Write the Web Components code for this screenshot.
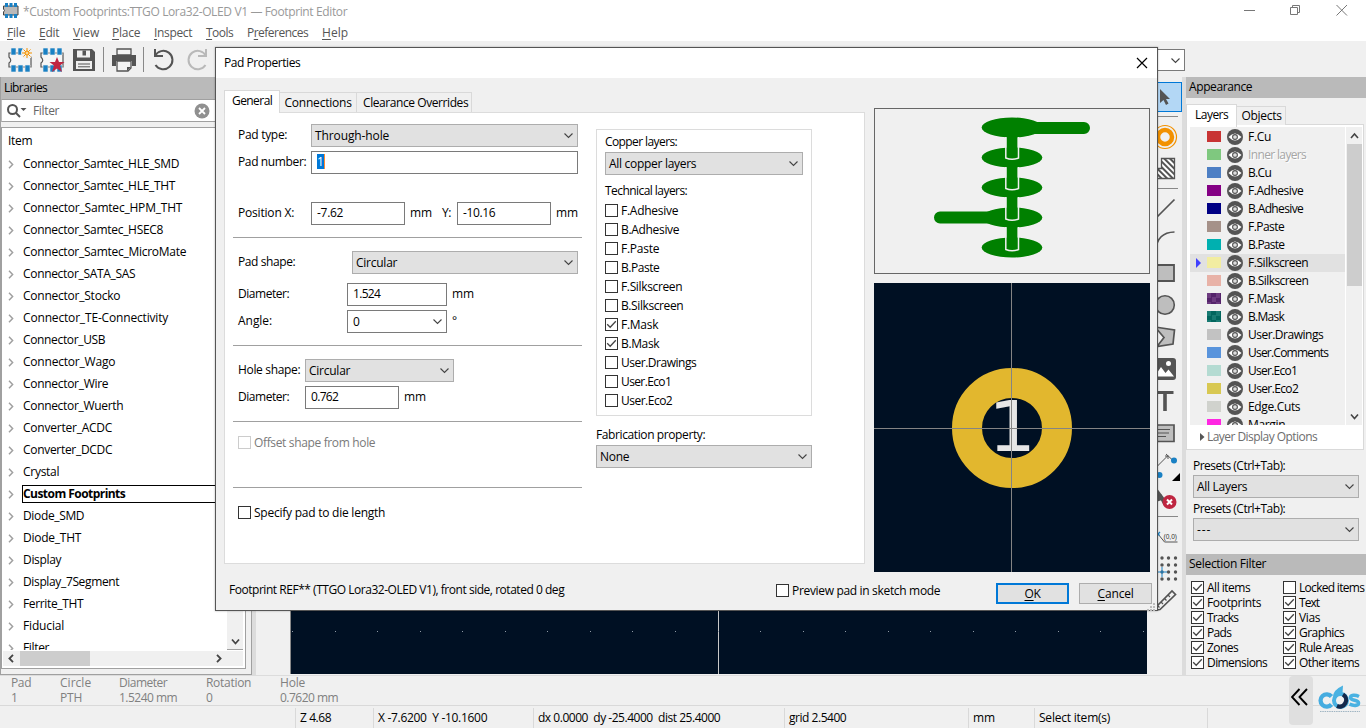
<!DOCTYPE html>
<html lang="en">
<head>
<meta charset="utf-8">
<title>Footprint Editor</title>
<style>
html,body{margin:0;height:100%;overflow:hidden;background:#f0f0f0}
body{font:12px/16px "Open Sans","Noto Sans",sans-serif;color:#000}
</style>
</head>
<body>
<footprint-editor></footprint-editor>
<script>
const BASE = '*{box-sizing:border-box}:host{display:block;box-sizing:border-box}svg{display:block}';
function define(name, css, html) {
  customElements.define(name, class extends HTMLElement {
    constructor() {
      super();
      this.attachShadow({mode: 'open'});
    }
    connectedCallback() {
      if (this.shadowRoot.childNodes.length) return;
      const body = typeof html === 'function' ? html(this) : html;
      this.shadowRoot.innerHTML = '<style>' + BASE + css + '</style>' + body;
    }
  });
}
const at = (el, n, d = '') => el.hasAttribute(n) ? el.getAttribute(n) : d;

/* Single line label; the w attribute sets its drawn width by tracking. */
customElements.define('ui-text', class extends HTMLElement {
  constructor() {
    super();
    this.attachShadow({mode: 'open'}).innerHTML =
      '<style>:host{display:block;white-space:pre;line-height:16px;height:16px;flex:none}span{display:inline-block}</style><span><slot></slot></span>';
  }
  connectedCallback() {
    const w = +this.getAttribute('w');
    if (!w) return;
    const s = this.shadowRoot.querySelector('span');
    const n = this.textContent.length;
    s.style.letterSpacing = '0';
    const nat = s.getBoundingClientRect().width;
    if (nat) s.style.letterSpacing = ((w + .2 - nat) / n).toFixed(3) + 'px';
    this.style.width = w + 'px';
  }
});
const T = (t, w, extra = '') => `<ui-text ${w ? `w="${w}"` : ''} ${extra}>${t}</ui-text>`;

define('ui-combo', `
:host{height:23px;border:1px solid #adadad;background:#e1e1e1;display:flex;align-items:center;justify-content:space-between;padding:0 3px 0 3px;flex:none}
:host([edit]){background:#fff;border-color:#7a7a7a;padding-left:5px}
svg{flex:none}`,
  el => `${T(at(el, 'value'), at(el, 'tw'))}<svg width="11" height="7" viewBox="0 0 11 7"><path d="M1.500 1.500l4 4 4-4" fill="none" stroke="#444" stroke-width="1.100"/></svg>`);

define('ui-input', `
:host{height:23px;border:1px solid #7a7a7a;background:#fff;padding:2px 0 0 5px;flex:none}
:host([selected]) ui-text{background:#0078d7;color:#fff;border-right:1px solid #ff8a30;height:15px;line-height:15px;width:8px}`,
  el => T(at(el, 'value'), at(el, 'tw')));

define('ui-check', `
:host{display:flex;align-items:center;height:15px;flex:none}
i{width:13px;height:13px;border:1px solid #333;background:#fff;flex:none;margin-right:3px}
:host([disabled]){color:#7a7a7a}
:host([disabled]) i{border-color:#ccc}`,
  el => `<i>${el.hasAttribute('on') ? '<svg width="11" height="11" viewBox="0 0 11 11"><path d="M1.200 5.200l3 3 5.600-5.900" fill="none" stroke="#444" stroke-width="1.300"/></svg>' : ''}</i>${T(at(el, 'label'), at(el, 'w'))}`);

define('title-bar', `
:host{display:flex;height:24px;background:#fff;color:#999;padding:0 18px 0 3px}
.ic{margin-top:3px}ui-text{margin:4px 0 0 4px}.g{flex:1}.b{display:flex;gap:35px;margin-top:4px}`,
  `<svg class="ic" width="16" height="15" viewBox="0 0 16 15"><path d="M.5 3h14.500v9h-14.500v-3q2-1.500 0-3z" fill="#b9b9b9" stroke="#444"/><path d="M2 0h3v4H2zM6.500 0h3v4h-3zM11 0h3v4h-3zM2 11h3v4H2zM6.500 11h3v4h-3zM11 11h3v4h-3z" fill="#1a81c4"/></svg>
  ${T('*Custom Footprints:TTGO Lora32-OLED V1 — Footprint Editor', 324)}
  <span class="g"></span>
  <span class="b"><svg width="11" height="12"><path d="M0 6.500h11" stroke="#777"/></svg>
  <svg width="11" height="12"><path d="M.5 3.500h7v7h-7zM2.500 3.500v-2h7v7h-2" fill="none" stroke="#777"/></svg>
  <svg width="12" height="12"><path d="M.5 1l10.500 10.500M11 1L.5 11.500" stroke="#777"/></svg></span>`);

define('menu-bar', `
:host{display:flex;height:17px;background:#fff;color:#555;padding:1px 0 0 7px}
u{text-underline-offset:2px}`,
  [['File', 18, 0, 14], ['Edit', 20, 0, 14], ['View', 26, 0, 13], ['Place', 28, 0, 14], ['Inspect', 38, 0, 14], ['Tools', 27, 0, 14], ['Preferences', 61, 1, 14], ['Help', 26, 0, 0]]
    .map(([t, w, i, g]) => T(t.slice(0, i) + '<u>' + t[i] + '</u>' + t.slice(i + 1), w, `style="margin-right:${g}px"`)).join(''));

const chip = '<path d="M2 6h22v14h-22v-4q3.500-2.500 0-6z" fill="#f6f6f6" stroke="#555" stroke-width="1.200"/><path d="M4 1h5v7H4zM11 1h5v7h-5zM18 1h5v7h-5zM4 18h5v7H4zM11 18h5v7h-5zM18 18h5v7h-5z" fill="#1a81c4" stroke="#f0f0f0" stroke-width=".6"/>';
define('tool-bar', `
:host{display:flex;height:36px;padding:6px 0 0 7px;background:#f0f0f0}
svg{margin-right:6px;flex:none}i{width:1px;height:25px;background:#888;margin-right:8px}
.g{flex:1}.c{width:60px;margin:2px 181px 0 0}`,
  `<svg width="26" height="26" viewBox="0 0 26 26">${chip}<circle cx="20" cy="6" r="6" fill="#f0f0f0"/><path d="M20 1v10M15 6h10M16.500 2.500l7 7M23.500 2.500l-7 7" stroke="#f29100"/><circle cx="20" cy="6" r="2" fill="#ffd591" stroke="#f29100"/></svg>
  <svg width="26" height="26" viewBox="0 0 26 26">${chip}<path d="M18 10l2 5h5.500l-4.500 3.600 2 6.400-5-3.500-5 3.500 2-6.400-4.500-3.600h5.500z" fill="#bf2641"/></svg>
  <svg width="26" height="26" viewBox="0 0 26 26" style="margin-right:6px"><path d="M2 2h19l3 3v19H2z" fill="#545454"/><path d="M6 3.500h13v7H6zM5 14h16v8H5z" fill="#f0f0f0"/><path d="M11.500 3.500h3.500v5h-3.500z" fill="#545454"/><path d="M7 17h12M7 19.800h12" stroke="#545454"/></svg>
  <i style="margin-right:7px"></i>
  <svg width="26" height="26" viewBox="0 0 26 26" style="margin-right:6px"><path d="M6 2h14v6H6z" fill="#f4f4f4" stroke="#545454" stroke-width="1.300"/><path d="M1 8h24v11h-4v-5H5v5H1z" fill="#545454"/><path d="M6 14h14v7l-3 3H6z" fill="#f4f4f4" stroke="#545454" stroke-width="1.300"/><path d="M20 20h-4v4z" fill="#545454"/></svg>
  <i style="margin-right:7px"></i>
  <svg width="26" height="26" viewBox="0 0 26 26" style="margin-right:7px"><path d="M4 2v7h8M4 9A9.200 9.200 0 1 1 4.500 18" fill="none" stroke="#545454" stroke-width="2"/></svg>
  <svg width="26" height="26" viewBox="0 0 26 26"><path d="M22 2v7h-8M22 9A9.200 9.200 0 1 0 21.500 18" fill="none" stroke="#b9b9b9" stroke-width="2"/></svg>
  <span class="g"></span><ui-combo class="c" edit value="" style="height:22px"></ui-combo>`);

const libs = [['Connector_Samtec_HLE_SMD', 156], ['Connector_Samtec_HLE_THT', 152], ['Connector_Samtec_HPM_THT', 159], ['Connector_Samtec_HSEC8', 140], ['Connector_Samtec_MicroMate', 163], ['Connector_SATA_SAS', 112], ['Connector_Stocko', 97], ['Connector_TE-Connectivity', 145], ['Connector_USB', 82], ['Connector_Wago', 92], ['Connector_Wire', 85], ['Connector_Wuerth', 100], ['Converter_ACDC', 89], ['Converter_DCDC', 89], ['Crystal', 36], ['Custom Footprints', 102], ['Diode_SMD', 61], ['Diode_THT', 58], ['Display', 38], ['Display_7Segment', 96], ['Ferrite_THT', 60], ['Fiducial', 41], ['Filter', 26]];
define('tree-row', `
:host{display:flex;height:22px;align-items:center;padding-left:6px}
svg{margin-right:8px;flex:none}
div{height:18px;flex:1;border:1px solid transparent;display:flex;align-items:center}
:host([sel]) div{border-color:#000;font-weight:bold}`,
  el => `<svg width="6" height="9" viewBox="0 0 6 9"><path d="M1 .8l3.600 3.700L1 8.200" fill="none" stroke="#a0a0a0" stroke-width="1.500"/></svg><div>${T(at(el, 'label'), at(el, 'w'))}</div>`);
define('library-tree', `
:host{width:252px;height:598px;border:1px solid #a0a0a0;border-top:0;flex:none;display:flex;flex-direction:column;background:#f0f0f0}
h3{margin:0;height:22px;background:#bababa;padding:3px 3px;font:inherit}
.s{height:23px;background:#fff;border:1px solid #a0a0a0;border-left-color:#bbb;display:flex;align-items:center;padding-left:4px;color:#666;width:246px}
.s ui-text{margin-left:6px}
.t{margin-top:5px;height:542px;width:245px;background:#fff;border:1px solid #a0a0a0;display:flex;flex-direction:column}
.m{height:522px;display:flex;overflow:hidden}
.l{flex:1;overflow:hidden;padding-top:2px}.l>ui-text{margin:3px 0 4px 6px}
.v{width:16px;margin-right:2px;background:#f0f0f0;display:flex;align-items:flex-end;justify-content:center;padding-bottom:3px;border-bottom:1px solid #a0a0a0}
.h{height:15px;margin:1px 0 0 1px;background:#f0f0f0;display:flex;align-items:center;width:240px;padding-left:5px}
.h b{width:70px;height:15px;background:#cdcdcd;margin:0 126px 0 6px}`,
  `<h3>${T('Libraries', 43)}</h3>
  <div class="s"><svg width="21" height="16" viewBox="0 0 21 16"><circle cx="6.500" cy="6.500" r="4.500" fill="none" stroke="#545454" stroke-width="2"/><path d="M10 10l4 4" stroke="#545454" stroke-width="2"/><path d="M14.500 5h6l-3 3z" fill="#545454"/></svg>${T('Filter', 26)}
  <svg style="margin-left:135px" width="16" height="16" viewBox="0 0 16 16"><circle cx="8" cy="8" r="7.500" fill="#909090"/><path d="M5 5l6 6M11 5l-6 6" stroke="#fff" stroke-width="1.800"/></svg></div>
  <div class="t"><div class="m"><div class="l">${T('Item', 24)}
  ${libs.map(([l, w]) => `<tree-row label="${l}" w="${w}" ${l === 'Custom Footprints' ? 'sel' : ''}></tree-row>`).join('')}</div>
  <div class="v"><svg width="9" height="8" viewBox="0 0 9 8"><path d="M1 1.500l3.500 4 3.500-4" fill="none" stroke="#444" stroke-width="1.800"/></svg></div></div>
  <div class="h"><svg width="6" height="9" viewBox="0 0 6 9"><path d="M5 .8l-3.600 3.700L5 8.200" fill="none" stroke="#444" stroke-width="1.800"/></svg><b></b><svg width="6" height="9" viewBox="0 0 6 9"><path d="M1 .8l3.600 3.700L1 8.200" fill="none" stroke="#444" stroke-width="1.800"/></svg></div></div>`);

define('board-canvas', `:host{width:857px;height:597px;background:#001023;flex:none;border-left:1px solid #888}`,
  `<svg width="856" height="597"><path d="M427.500 0v597" stroke="#c8c8c8"/><g fill="#8f9aa5">${Array.from({length: 21}, (_, i) => `<rect x="${Math.round(1 + i * 42.55)}" y="554" width="1" height="1"/>`).join('')}</g></svg>`);

/* Right-hand drawing tools; icons share a 34x32 cell. */
const K = '#545454';
const cell = (inner, h = 32) => `<svg width="34" height="${h}" viewBox="0 0 34 ${h}">${inner}</svg>`;
const sep = h => `<svg width="34" height="${h}" viewBox="0 0 34 ${h}"><path d="M4 ${Math.floor(h / 2) - .5}h27" stroke="#888"/></svg>`;
define('draw-tools', `
:host{width:35px;height:598px;flex:none;padding-top:5px;background:#f0f0f0}
.on{height:30px;border:1px solid #0078d7;background:#b3d7f5}`,
  `<div class="on"><svg width="32" height="28" viewBox="0 0 32 28"><path d="M12 6v14l3.500-3 2.500 5 2.500-1.500-2.500-4.500h4z" fill="${K}"/></svg></div>
  ${sep(10)}
  ${cell(`<circle cx="18" cy="15" r="11.500" fill="none" stroke="#f29100" stroke-width="1.200"/><circle cx="18" cy="15" r="7" fill="none" stroke="#f29100" stroke-width="4.500"/>`)}
  ${cell(`<defs><pattern id="p" width="4" height="4" patternUnits="userSpaceOnUse" patternTransform="rotate(-45)"><rect width="4" height="4" fill="#fff"/><rect width="2" height="4" fill="${K}"/></pattern></defs><path d="M8.500 24.500v-10h6v-10h13v20z" fill="url(#p)" stroke="${K}" stroke-width="1.300"/>`)}
  ${sep(7)}
  ${cell(`<path d="M9 25L27.500 6.500" stroke="${K}" stroke-width="1.700"/>`)}
  ${cell(`<path d="M9 25Q10 7.500 27.500 7" fill="none" stroke="${K}" stroke-width="1.700"/>`)}
  ${cell(`<path d="M8 8h19v16h-19z" fill="#bebebe" stroke="${K}" stroke-width="1.800"/>`)}
  ${cell(`<circle cx="18" cy="16" r="9.300" fill="#bebebe" stroke="${K}" stroke-width="1.600"/>`)}
  ${cell(`<path d="M8 6l19.500 3-1.500 14-16 2.500 7-9z" fill="#bebebe" stroke="${K}" stroke-width="1.700"/>`)}
  ${cell(`<rect x="6" y="5" width="23" height="22" rx="3" fill="${K}"/><path d="M7.500 23.500L14 14l4.500 6 3-3.500 5.500 7z" fill="#fff"/><circle cx="21.500" cy="10.500" r="2.500" fill="#fff"/>`)}
  ${cell(`<path d="M9.500 6h17v3h-6.700v17h-3.600V9H9.500z" fill="${K}"/>`)}
  ${cell(`<path d="M8 8h19v16.500H8z" fill="#bebebe" stroke="${K}" stroke-width="1.700"/><path d="M11 12.500h12M11 16h11M11 19.500h8" stroke="${K}"/>`)}
  ${cell(`<path d="M8.500 19L21 6.500M19 5l6 5.500M8.500 16l2 4M18 7h3v3" fill="none" stroke="${K}"/><circle cx="27" cy="11.500" r="3" fill="#1a81c4"/><circle cx="12.500" cy="26" r="3" fill="#1a81c4"/><path d="M33 24v8h-8z"/>`, 33)}
  ${cell(`<path d="M9 5v15l9-3z" fill="${K}"/><path d="M13 13l4 8" stroke="${K}" stroke-width="3"/><circle cx="22.500" cy="20" r="7" fill="#bf2641"/><path d="M20 17.500l5 5M25 17.500l-5 5" stroke="#fff" stroke-width="2"/>`)}
  ${sep(6)}
  ${cell(`<path d="M11 14l6.500 8h13" fill="none" stroke="${K}"/><path d="M8 11l4.500 4.500M13 12l-4 4" stroke="#1a81c4" stroke-width="1.300"/><text x="16.500" y="19" font-family="Liberation Sans" font-size="8" fill="#333" textLength="13.500" lengthAdjust="spacingAndGlyphs">(0,0)</text>`, 33)}
  ${cell(`<g fill="${K}">${[5, 12, 19, 26].map(y => [15, 21.500, 28.500].map(x => `<circle cx="${x}" cy="${y}" r="1.700"/>`).join('')).join('')}</g><path d="M10 19h10M15 14v10" stroke="#1a81c4"/>`)}
  ${cell(`<path d="M10 21L25 6l3.500 3.500L13 24.500l-4 .500z" fill="#f0f0f0" stroke="${K}" stroke-width="1.700"/><path d="M21 10l2 2M17.500 13.500l2 2M14 17l2 2M10.500 20.500l2 2" stroke="${K}" stroke-width="1.200"/>`)}`);

const layers = [['F.Cu', '#c83434', 23], ['Inner layers', '#7fc87f', 58], ['B.Cu', '#4d7fc4', 23], ['F.Adhesive', '#840084', 55], ['B.Adhesive', '#000084', 55], ['F.Paste', '#a59189', 36], ['B.Paste', '#00b0b0', 36], ['F.Silkscreen', '#f2eda1', 60], ['B.Silkscreen', '#e8b2a7', 60], ['F.Mask', 'repeating-conic-gradient(#55246b 0 25%,#6d3b80 0 50%) 0 0/9px 9px', 36], ['B.Mask', 'repeating-conic-gradient(#02665e 0 25%,#187a72 0 50%) 0 0/9px 9px', 36], ['User.Drawings', '#c2c2c2', 75], ['User.Comments', '#5994dc', 80], ['User.Eco1', '#b4dbd2', 49], ['User.Eco2', '#d8c852', 50], ['Edge.Cuts', '#d0d2cd', 52], ['Margin', '#ff26e2', 37]];
define('layer-row', `
:host{display:flex;height:18px;align-items:center}
.a{width:17px;padding-left:6px}.w{width:14px;height:11px;margin-right:6px;position:relative;top:-.5px}
svg.e{margin-right:5px;flex:none}
:host([sel]){background:#e1e1e1}
:host([dim]) ui-text{color:#a6a6a6;text-shadow:1px 1px #fff}`,
  el => `<span class="a">${el.hasAttribute('sel') ? '<svg width="5" height="10"><path d="M0 0l5 5-5 5z" fill="#4040ff"/></svg>' : ''}</span><span class="w" style="background:${at(el, 'color')}"></span>
  <svg class="e" width="16" height="16" viewBox="0 0 16 16"><circle cx="8" cy="8" r="8" fill="#545454"/><path d="M1.500 8q6.500-7 13 0q-6.500 7-13 0z" fill="#fff"/><circle cx="8" cy="8" r="2.400" fill="#ddd" stroke="#545454" stroke-width="1.100"/></svg>${T(at(el, 'label'), at(el, 'w'))}`);
define('tab-item', `
:host{height:19px;border:1px solid #d9d9d9;border-bottom:0;background:#f0f0f0;display:flex;justify-content:center;align-items:center;margin-top:2px;border-left:0;flex:none;padding-top:1px}
:host([active]){height:22px;margin:0 0 -1px;background:#fff;border-left:1px solid #d9d9d9;padding:0 0 3px;position:relative}`,
  el => T(at(el, 'label'), at(el, 'w')));
define('right-panels', `
:host{width:184px;height:598px;flex:none;padding-left:4px;background:linear-gradient(90deg,#dcdcdc 0 4px,#f0f0f0 4px)}
h3{margin:0;height:21px;background:#bababa;padding:2px 3px;font:inherit}
.tabs{display:flex;height:20px;margin-top:6px}.tabs tab-item[active]{height:23px}
.box{height:326px;width:178px;border:1px solid #d9d9d9;background:#fff;padding:2px 1px 0 3px}
.ls{display:flex;height:298px;overflow:hidden;background:#f0f0f0}.rows{flex:1;padding-top:1px}
.sb{width:17px;display:flex;flex-direction:column;align-items:center;background:#f0f0f0;border-left:1px solid #fff;padding-top:5px}
.sb b{width:15px;height:142px;background:#cdcdcd;margin:4px 0 127px;flex:none}
.sb svg{flex:none}
.ldo{display:flex;align-items:center;color:#6d6d6d;padding:4px 0 0 10px}
.pr{padding:8px 0 0 7px}.pr>ui-text{margin-bottom:1px}
.pr ui-combo{width:166px;margin-bottom:3px}
.sf{margin-top:13px}
.g{display:grid;grid-template-columns:92px 86px;padding:5px 0 0 5px}`,
  `<h3>${T('Appearance', 63)}</h3>
  <div class="tabs"><tab-item active label="Layers" w="33" style="width:51px"></tab-item><tab-item label="Objects" w="40" style="width:49px;padding:0 0 1px 1px"></tab-item></div>
  <div class="box"><div class="ls"><div class="rows">${layers.map(([l, c, w], i) => `<layer-row label="${l}" color="${c}" w="${w}" ${i === 7 ? 'sel' : ''} ${i === 1 ? 'dim' : ''}></layer-row>`).join('')}</div>
  <div class="sb"><svg width="9" height="8" viewBox="0 0 9 8"><path d="M1 6l3.500-4 3.500 4" fill="none" stroke="#444" stroke-width="1.600"/></svg><b></b><svg width="9" height="8" viewBox="0 0 9 8"><path d="M1 1.500l3.500 4 3.500-4" fill="none" stroke="#444" stroke-width="1.600"/></svg></div></div>
  <div class="ldo"><svg width="5" height="8" style="margin-right:2px"><path d="M0 0l4.500 4-4.500 4z" fill="#555"/></svg>${T('Layer Display Options', 110)}</div></div>
  <div class="pr">${T('Presets (Ctrl+Tab):', 92)}<ui-combo value="All Layers" tw="50"></ui-combo>${T('Presets (Ctrl+Tab):', 92)}<ui-combo value="---" tw="14"></ui-combo></div>
  <h3 class="sf">${T('Selection Filter', 77)}</h3>
  <div class="g">${[['All items', 43, 1], ['Locked items', 65, 0], ['Footprints', 54, 1], ['Text', 20, 1], ['Tracks', 31, 1], ['Vias', 21, 1], ['Pads', 24, 1], ['Graphics', 45, 1], ['Zones', 31, 1], ['Rule Areas', 54, 1], ['Dimensions', 60, 1], ['Other items', 60, 1]].map(([l, w, o]) => `<ui-check label="${l}" w="${w}" ${o ? 'on' : ''}></ui-check>`).join('')}</div>`);

define('message-panel', `
:host{display:flex;height:31px;border-bottom:1px solid #d9d9d9;color:#808080;padding-left:11px;border-top:1px solid #dcdcdc}
div{margin-top:-1px}
div ui-text{height:15px;line-height:15px}`,
  [['Pad', 20, '1', 6, 49], ['Circle', 31, 'PTH', 22, 59], ['Diameter', 48, '1.5240 mm', 58, 87], ['Rotation', 45, '0', 7, 74], ['Hole', 25, '0.7620 mm', 58, 70]].map(([a, b, c, d, w]) => `<div style="width:${w}px">${T(a, b)}${T(c, d)}</div>`).join(''));
define('status-bar', `
:host{display:flex;height:22px;padding-top:2px}
div{border-left:1px solid #d9d9d9;height:20px;padding:2px 0 0 4px}`,
  `<div style="width:295px;border:0"></div>` + [['Z 4.68', 31, 78], ['X -7.6200  Y -10.1600', 109, 160], ['dx 0.0000  dy -25.4000  dist 25.4000', 182, 251], ['grid 2.5400', 57, 184], ['mm', 22, 66], ['Select item(s)', 71, 173]].map(([t, w, c]) => `<div style="width:${c}px">${T(t, w)}</div>`).join('') + '<div></div>');

/* Corner widget that floats above the status area. */
define('corner-widget', `
:host{position:absolute;left:1289px;top:676px;width:77px;height:49px;display:flex;align-items:center}
.b{width:24px;height:49px;border-radius:4px;background:#dfdfdf;display:flex;align-items:center;justify-content:center;margin-right:5px;padding:0 4px 7px 0}`,
  `<span class="b"><svg width="17" height="18" viewBox="0 0 17 18"><path d="M8.500 1L1 9l7.500 8M16 1L8.500 9l7.500 8" fill="none" stroke="#000" stroke-width="1.900"/></svg></span>
  <svg width="44" height="32" viewBox="0 1 44 32"><g fill="none"><path d="M13.500 12.500A6.200 6.200 0 1 0 13.500 20.500" stroke="#45ace0" stroke-width="4.300"/><circle cx="22.500" cy="16.500" r="6.500" stroke="#4ab2e2" stroke-width="4"/><path d="M25 10.500a6.500 6.500 0 0 1-6 11.500" stroke="#14284a" stroke-width="4.200"/><path d="M41 12.500c-4-2-8.500-1.500-8.500 1 0 3.500 8 2 8 5.500 0 3-5 3-9 1.200" stroke="#4ab2e2" stroke-width="3.600"/></g><path d="M15 13q0-7 10-11.500l-.5 7.500q-5-.5-9.500 4z" fill="#4ab2e2"/><path d="M2 27.500h40" stroke="#9fb4c2" stroke-width="1.200" stroke-dasharray="1.500 .8"/></svg>`);

define('pad-stack', `:host{width:276px;height:166px;border:1px solid #666;background:#f0f0f0}`,
  `<svg width="274" height="164" viewBox="875 109 274 164"><g fill="#008000"><path d="M1022 122h62a6 6 0 0 1 0 12h-62zM1000 211.500h-60a6 6 0 0 0 0 12h60z"/>
  ${[127.500, 157.500, 187.500, 217.500, 247.500].map(y => `<ellipse cx="1012" cy="${y}" rx="30.300" ry="10"/>`).join('')}</g>
  ${[[137, 158], [167, 188.500], [197, 219], [227, 249.500]].map(([a, b]) => `<path d="M1006.500 ${a}h11v${b - a}q-5.500 2-11 0z" fill="#008000"/><path d="M1005.800 ${a}v${b - a}q6.300 2.500 12.700 0v${a - b}" fill="none" stroke="#f0f0f0" stroke-width="1.500"/>`).join('')}</svg>`);
define('pad-preview', `:host{width:276px;height:289px;background:#001023}`,
  `<svg width="276" height="289" viewBox="874 283 276 289"><circle cx="1012" cy="428" r="45" fill="none" stroke="#e2b72e" stroke-width="30"/><text x="0" y="0" transform="translate(1012 450.500) scale(1.080 1)" font-family="DejaVu Sans" font-size="70" fill="#e6e6e6" text-anchor="middle">1</text><path d="M1011.500 283v289M874 428.500h276" stroke="#848484"/></svg>`);

const rest = ['F.Adhesive', 57, 'B.Adhesive', 58, 'F.Paste', 38, 'B.Paste', 38, 'F.Silkscreen', 61, 'B.Silkscreen', 62, 'F.Mask', 37, 'B.Mask', 38, 'User.Drawings', 75, 'User.Eco1', 50, 'User.Eco2', 51];
define('pad-form', `
:host{display:flex;width:641px;height:452px;border:1px solid #dcdcdc;background:#fff;padding:11px 8px 0}
.l{width:349px;padding:0}
.r{display:flex;height:23px;margin-bottom:4px;padding-left:5px}
.r>ui-text:first-child{margin-top:3px}
hr{border:0;height:1px;background:#a0a0a0;margin:0}
.c{margin-left:14px;width:216px}
.gb{height:287px;border:1px solid #dcdcdc;margin-top:5px;padding:4px 8px}
.gb ui-combo{width:198px;margin:2px 0 8px}
.gb ui-check{height:19px}`,
  `<div class="l">
  <div class="r">${T('Pad type:', 49, 'style="margin-right:24px"')}<ui-combo style="width:267px" value="Through-hole" tw="74"></ui-combo></div>
  <div class="r" style="margin-bottom:28px">${T('Pad number:', 68, 'style="margin-right:5px"')}<ui-input selected style="width:267px" value="1"></ui-input></div>
  <div class="r" style="margin-bottom:12px">${T('Position X:', 56, 'style="margin-right:17px"')}<ui-input style="width:94px" value="-7.62" tw="26"></ui-input>${T('mm', 22, 'style="margin:3px 10px 0 5px"')}${T('Y:', 9, 'style="margin:3px 6px 0 0"')}<ui-input style="width:94px" value="-10.16" tw="32"></ui-input>${T('mm', 22, 'style="margin:3px 0 0 5px"')}</div>
  <hr><div class="r" style="margin:13px 0 9px">${T('Pad shape:', 57, 'style="margin-right:57px"')}<ui-combo style="width:226px" value="Circular" tw="41"></ui-combo></div>
  <div class="r">${T('Diameter:', 51, 'style="margin-right:58px"')}<ui-input style="width:100px" value="1.524" tw="27"></ui-input>${T('mm', 22, 'style="margin:3px 0 0 5px"')}</div>
  <div class="r" style="margin-bottom:12px">${T('Angle:', 34, 'style="margin-right:75px"')}<ui-combo edit style="width:100px" value="0" tw="7"></ui-combo>${T('°', 5, 'style="margin:3px 0 0 5px"')}</div>
  <hr><div class="r" style="margin:13px 0 4px">${T('Hole shape:', 62, 'style="margin-right:5px"')}<ui-combo style="width:149px" value="Circular" tw="41"></ui-combo></div>
  <div class="r" style="margin-bottom:12px">${T('Diameter:', 51, 'style="margin-right:16px"')}<ui-input style="width:94px" value="0.762" tw="27"></ui-input>${T('mm', 22, 'style="margin:3px 0 0 5px"')}</div>
  <hr><ui-check disabled style="margin:13px 0 37px 5px" label="Offset shape from hole" w="121"></ui-check>
  <hr><ui-check style="margin:17px 0 0 5px" label="Specify pad to die length" w="131"></ui-check></div>
  <div class="c"><div class="gb">${T('Copper layers:', 72)}<ui-combo value="All copper layers" tw="87"></ui-combo>${T('Technical layers:', 82, 'style="margin-bottom:2px"')}
  ${Array.from({length: 11}, (_, i) => `<ui-check label="${rest[2 * i]}" w="${rest[2 * i + 1]}" ${i === 6 || i === 7 ? 'on' : ''}></ui-check>`).join('')}</div>
  ${T('Fabrication property:', 109, 'style="margin:11px 0 2px"')}<ui-combo value="None" tw="29"></ui-combo></div>`);

define('push-button', `
:host{height:21px;width:73px;border:1px solid #adadad;background:#e1e1e1;display:flex;align-items:center;justify-content:center;flex:none}
:host([primary]){border:2px solid #0078d7}u{text-underline-offset:2px}`,
  el => { const l = at(el, 'label'); return T(`<u>${l[0]}</u>${l.slice(1)}`, at(el, 'w')); });
define('pad-dialog', `
:host{position:absolute;left:215px;top:47px;width:943px;height:564px;border:1px solid #555;background:#f0f0f0;box-shadow:0 0 2px rgba(0,0,0,.3)}
header{height:30px;background:#fff;display:flex;justify-content:space-between;padding:7px 9px 0 8px}
main{display:flex;padding:12px 0 0 8px;height:494px}
.tabs{display:flex;height:22px}.tabs tab-item{height:20px}.tabs tab-item[active]{height:23px}
.p{margin-left:9px;padding-top:18px}.p pad-preview{margin-top:9px}
footer{display:flex;padding:11px 5px 0 13px;position:relative}
.grip{position:absolute;right:1px;bottom:-8px}`,
  `<header>${T('Pad Properties', 76)}<svg width="12" height="12" style="margin-top:2px"><path d="M1 1l10 10M11 1L1 11" stroke="#000" stroke-width="1.200"/></svg></header>
  <main><div><div class="tabs"><tab-item active label="General" w="40" style="width:56px"></tab-item><tab-item label="Connections" w="67" style="width:77px"></tab-item><tab-item label="Clearance Overrides" w="105" style="width:115px;padding-left:3px"></tab-item></div><pad-form></pad-form></div>
  <div class="p"><pad-stack></pad-stack><pad-preview></pad-preview></div></main>
  <footer>${T('Footprint REF** (TTGO Lora32-OLED V1), front side, rotated 0 deg', 335, 'style="margin:-1px 212px 0 0"')}<ui-check label="Preview pad in sketch mode" w="148" style="margin:0 56px 0 0"></ui-check><push-button primary label="OK" w="16" style="margin-right:10px"></push-button><push-button label="Cancel" w="36"></push-button>
  <svg class="grip" width="9" height="9"><path d="M6 0h2v2h-2zM3 3h2v2h-2zM6 3h2v2h-2zM0 6h2v2h-2zM3 6h2v2h-2zM6 6h2v2h-2z" fill="#bbb"/></svg></footer>`);

define('footprint-editor', `
:host{width:1366px;height:728px;background:#f0f0f0;position:relative;overflow:hidden}
.m{display:flex;height:598px}
.lt{width:38px;border-left:4px solid #dcdcdc;flex:none}`,
  `<title-bar></title-bar><menu-bar></menu-bar><tool-bar></tool-bar>
  <div class="m"><library-tree></library-tree><div class="lt"></div><board-canvas></board-canvas><draw-tools></draw-tools><right-panels></right-panels></div>
  <message-panel></message-panel><status-bar></status-bar>
  <pad-dialog></pad-dialog><corner-widget></corner-widget>`);
</script>
</body>
</html>
